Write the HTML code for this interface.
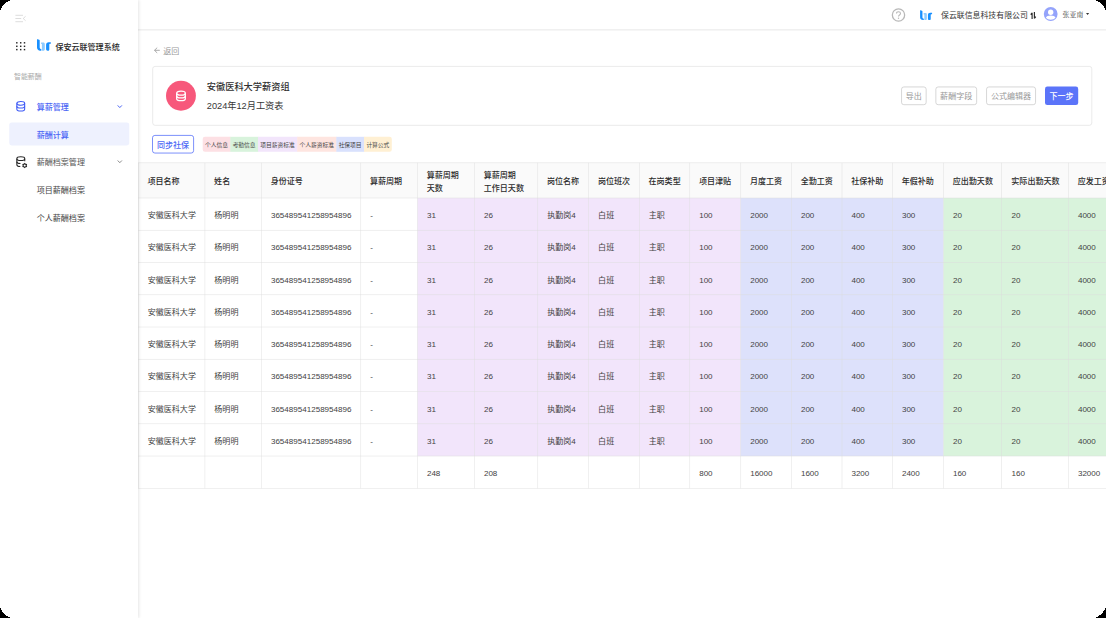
<!DOCTYPE html>
<html lang="zh-CN"><head><meta charset="utf-8"><title>薪酬计算</title><style>
html,body{margin:0;padding:0}
body{width:1106px;height:618px;background:#000;overflow:hidden;font-family:"Liberation Sans",sans-serif}
#app{position:absolute;left:0;top:0;width:1106px;height:618px;background:#fff;overflow:hidden}
#corners{z-index:9}
.abs,.t{position:absolute;display:block}
.t{font-size:0;line-height:0;color:transparent;overflow:hidden;white-space:nowrap}
.t svg{display:block}
.t text{font-family:"Liberation Sans","Noto Sans CJK SC",sans-serif;font-weight:400}
.t text.m{font-weight:500}
.t text.s{font-family:"Liberation Serif","Noto Serif CJK SC",serif}
aside{background:#fff;box-shadow:1px 0 3px rgba(0,0,0,.10);z-index:3}
header{background:#fff}
main{position:absolute;left:0;top:0}
</style></head>
<body>
<div id="app">
<aside class="abs" style="left:0;top:0;width:138.25px;height:618px">
<svg class="abs" style="left:14px;top:13px" width="14" height="11" viewBox="0 0 14 11" fill="none" stroke="#cfcfcf" stroke-width="0.7"><g transform="translate(1 1)"><path d="M0.4 1.3H8M0.4 4.5H6.2M0.4 7.7H8M10.6 2.3L8.2 4.5L10.6 6.7"/></g></svg>
<svg class="abs" style="left:14px;top:40px" width="13" height="12" viewBox="0 0 13 12" fill="#262626"><g transform="translate(1.8 1.8)"><rect x="0.28" y="0.28" width="1.45" height="1.45"/><rect x="0.28" y="3.78" width="1.45" height="1.45"/><rect x="0.28" y="7.08" width="1.45" height="1.45"/><rect x="4.18" y="0.28" width="1.45" height="1.45"/><rect x="4.18" y="3.78" width="1.45" height="1.45"/><rect x="4.18" y="7.08" width="1.45" height="1.45"/><rect x="7.98" y="0.28" width="1.45" height="1.45"/><rect x="7.98" y="3.78" width="1.45" height="1.45"/><rect x="7.98" y="7.08" width="1.45" height="1.45"/></g></svg>
<svg class="abs" style="left:36px;top:38px" width="16" height="14" viewBox="0 0 16 14"><g transform="translate(1 1.2)"><path d="M0 0.4C0 0.1 0.3 -0.1 0.6 0L2.1 0.5C2.5 0.6 2.7 0.9 2.7 1.3V8.2C2.7 9 3.2 9.6 4.3 9.9V11.5H3.4C1.3 11.5 0 10.3 0 8.3Z" fill="#1890ff"/><path d="M4.1 3.2H6.2C7.2 3.2 7.8 3.8 7.8 4.8V10C7.8 10.9 7.2 11.5 6.3 11.5H4.9V4.9H4.1Z" fill="#8ecbff"/><path d="M9.1 5.6C9.1 4 10.1 3 11.7 3H13.5C13.8 3 13.9 3.2 13.9 3.5V4C13.9 4.4 13.7 4.6 13.3 4.6H12.9C12.5 4.6 12.3 4.8 12.3 5.2V10.2C12.3 11 11.8 11.5 11 11.5H10.6C9.6 11.5 9.1 10.9 9.1 9.9Z" fill="#1890ff"/></g></svg>
<span class="t" style="left:54px;top:41px;width:67px;height:11px"><svg width="67" height="11" viewBox="0 0 67 11"><text class="m" x="1.4" y="8.77" font-size="8.064" fill="#262626">保安云联管理系统</text></svg></span>
<span class="t" style="left:13px;top:72px;width:30px;height:10px"><svg width="30" height="10" viewBox="0 0 30 10"><text x="1" y="7.32" font-size="6.912" fill="#aaa">智能薪酬</text></svg></span>
<svg class="abs" style="left:15px;top:99px" width="12" height="14" viewBox="0 0 12 14" fill="none" stroke="#3f5bf6" stroke-width="1.3"><g transform="translate(1 1.9) scale(0.84821 0.82308)"><g transform="translate(-0.4 0)"><ellipse cx="6" cy="3" rx="4.6" ry="2.2"/><path d="M1.4 3V10C1.4 11.2 3.5 12.2 6 12.2S10.6 11.2 10.6 10V3"/><path d="M1.4 6.5C1.4 7.7 3.5 8.7 6 8.7S10.6 7.7 10.6 6.5"/></g></g></svg>
<span class="t" style="left:35px;top:101px;width:35px;height:11px"><svg width="35" height="11" viewBox="0 0 35 11"><text class="m" x="1.7" y="8.67" font-size="8.064" fill="#4c66f5">算薪管理</text></svg></span>
<svg class="abs" style="left:116px;top:104px" width="8" height="6" viewBox="0 0 8 6" fill="none" stroke="#4c66f5" stroke-width="1.0"><g transform="translate(1.3 1)"><path d="M0.4 0.4L2.5 2.6L4.6 0.4"/></g></svg>
<svg class="abs" style="left:8px;top:121px" width="123" height="26" viewBox="0 0 123 26"><g transform="translate(1.25 1.4)"><rect x="0" y="0" width="120" height="23" rx="2.4" fill="#eef1fe"/></g></svg>
<span class="t" style="left:35px;top:129px;width:35px;height:11px"><svg width="35" height="11" viewBox="0 0 35 11"><text class="m" x="1.7" y="8.67" font-size="8.064" fill="#4c66f5">薪酬计算</text></svg></span>
<svg class="abs" style="left:15px;top:155px" width="12" height="14" viewBox="0 0 12 14" fill="none" stroke="#262626" stroke-width="1.25"><g transform="translate(1 1.1) scale(0.85714 0.85385)"><g transform="translate(-0.4 0)"><ellipse cx="6" cy="3" rx="4.6" ry="2.2"/><path d="M1.4 3V10C1.4 11.1 3.2 12 5.4 12.2M10.6 3V6"/><path d="M1.4 6.5C1.4 7.6 3.2 8.5 5.6 8.7"/></g></g></svg>
<svg class="abs" style="left:20px;top:161px" width="9" height="9" viewBox="0 0 9 9" fill="#2b2b2b"><g transform="translate(1.8 1.6) scale(0.90625)"><path fill-rule="evenodd" d="M3.2 0.1L4.35 1.21L5.88 1.65L5.5 3.2L5.88 4.75L4.35 5.19L3.2 6.3L2.05 5.19L0.52 4.75L0.9 3.2L0.52 1.65L2.05 1.21ZM3.2 2.05a1.15 1.15 0 1 0 0.01 0Z"/></g></svg>
<span class="t" style="left:35px;top:157px;width:52px;height:11px"><svg width="52" height="11" viewBox="0 0 52 11"><text x="1.7" y="8.37" font-size="8.064" fill="#555">薪酬档案管理</text></svg></span>
<svg class="abs" style="left:116px;top:159px" width="8" height="6" viewBox="0 0 8 6" fill="none" stroke="#777" stroke-width="0.85"><g transform="translate(1.3 1.1)"><path d="M0.4 0.4L2.5 2.6L4.6 0.4"/></g></svg>
<span class="t" style="left:35px;top:184px;width:52px;height:11px"><svg width="52" height="11" viewBox="0 0 52 11"><text x="1.7" y="8.87" font-size="8.064" fill="#444">项目薪酬档案</text></svg></span>
<span class="t" style="left:35px;top:212px;width:52px;height:11px"><svg width="52" height="11" viewBox="0 0 52 11"><text x="1.7" y="8.57" font-size="8.064" fill="#444">个人薪酬档案</text></svg></span>
</aside>
<header class="abs" style="left:138.25px;top:0;width:967.75px;height:30px"></header>
<svg class="abs" style="left:138px;top:29px" width="968" height="2" viewBox="0 0 968 2"><g transform="translate(0 0)"><rect width="968" height="1.6" fill="#f0f0f0"/></g></svg>
<svg class="abs" style="left:890px;top:7px" width="17" height="16" viewBox="0 0 17 16" fill="none" stroke="#b8b8b8" stroke-width="1.3"><g transform="translate(1.5 1)"><circle cx="7" cy="7" r="6.15"/><path d="M5 5.6C5 4.4 5.9 3.7 7 3.7S9 4.4 9 5.5C9 7 7 7 7 8.6" stroke-width="1.05"/><circle cx="7" cy="10.3" r="0.7" fill="#b8b8b8" stroke="none"/></g></svg>
<svg class="abs" style="left:919px;top:9px" width="15" height="13" viewBox="0 0 15 13"><g transform="translate(1.1 1.2) scale(0.86331 0.86087)"><path d="M0 0.4C0 0.1 0.3 -0.1 0.6 0L2.1 0.5C2.5 0.6 2.7 0.9 2.7 1.3V8.2C2.7 9 3.2 9.6 4.3 9.9V11.5H3.4C1.3 11.5 0 10.3 0 8.3Z" fill="#1890ff"/><path d="M4.1 3.2H6.2C7.2 3.2 7.8 3.8 7.8 4.8V10C7.8 10.9 7.2 11.5 6.3 11.5H4.9V4.9H4.1Z" fill="#8ecbff"/><path d="M9.1 5.6C9.1 4 10.1 3 11.7 3H13.5C13.8 3 13.9 3.2 13.9 3.5V4C13.9 4.4 13.7 4.6 13.3 4.6H12.9C12.5 4.6 12.3 4.8 12.3 5.2V10.2C12.3 11 11.8 11.5 11 11.5H10.6C9.6 11.5 9.1 10.9 9.1 9.9Z" fill="#1890ff"/></g></svg>
<span class="t" style="left:940px;top:10px;width:89px;height:11px"><svg width="89" height="11" viewBox="0 0 89 11"><text x="1" y="8.4" font-size="7.9" fill="#333">保云联信息科技有限公司</text></svg></span>
<svg class="abs" style="left:1029px;top:10px" width="9" height="11" viewBox="0 0 9 11" fill="none" stroke="#2b2b2b" stroke-width="1.15"><g transform="translate(1.4 1.9) scale(1 1.02778)"><path d="M1.7 7V0.9M1.7 0.9L0.3 2.6M4 0.2V6.3M4 6.3L5.4 4.6"/></g></svg>
<svg class="abs" style="left:1042px;top:6px" width="17" height="16" viewBox="0 0 17 16"><g transform="translate(1.8 1.1) scale(0.985714)"><circle cx="7" cy="7" r="7" fill="#94a3fb"/><circle cx="7" cy="5.2" r="2.7" fill="#fff"/><path d="M2.1 10.6C2.6 9.2 4.6 8.5 7 8.5S11.4 9.2 11.9 10.6C10.8 12 9 12.9 7 12.9S3.2 12 2.1 10.6Z" fill="#fff"/></g></svg>
<span class="t" style="left:1061px;top:10px;width:24px;height:10px"><svg width="24" height="10" viewBox="0 0 24 10"><text class="s" x="1.6" y="7.22" font-size="6.912" fill="#3a3a3a">张亚南</text></svg></span>
<svg class="abs" style="left:1085px;top:12px" width="6" height="5" viewBox="0 0 6 5" fill="#333"><g transform="translate(1 1.1)"><path d="M0 0H3.2L1.6 2Z"/></g></svg>
<main>
<svg class="abs" style="left:152px;top:46px" width="9" height="9" viewBox="0 0 9 9" fill="none" stroke="#939393" stroke-width="0.78"><g transform="translate(1.9 1.3)"><path d="M5.9 3H0.7M3.3 0.35L0.6 3L3.3 5.65"/></g></svg>
<span class="t" style="left:162px;top:45px;width:19px;height:11px"><svg width="19" height="11" viewBox="0 0 19 11"><text x="1.2" y="8.72" font-size="8.064" fill="#999">返回</text></svg></span>
<svg class="abs" style="left:151px;top:65px" width="943" height="62" viewBox="0 0 943 62"><g transform="translate(1.4 1.1)"><rect x="0.3" y="0.3" width="939.1" height="58.9" rx="2.4" fill="#fff" stroke="#dcdcdc" stroke-width="0.6"/></g></svg>
<svg class="abs" style="left:165px;top:79px" width="32" height="33" viewBox="0 0 32 33"><g transform="translate(1 1.8)"><circle cx="14.95" cy="14.95" r="14.95" fill="#f7587b"/></g></svg>
<svg class="abs" style="left:174px;top:89px" width="14" height="14" viewBox="0 0 14 14" fill="none" stroke="#fff" stroke-width="1.45"><g transform="translate(1.7 1.4) scale(0.88333 0.88095)"><ellipse cx="6" cy="3.1" rx="4.9" ry="2.2"/><path d="M1.1 3.1V9.4C1.1 10.6 3.3 11.6 6 11.6S10.9 10.6 10.9 9.4V3.1"/><path d="M1.1 6.25C1.1 7.45 3.3 8.45 6 8.45S10.9 7.45 10.9 6.25"/></g></svg>
<span class="t" style="left:205px;top:81px;width:86px;height:12px"><svg width="86" height="12" viewBox="0 0 86 12"><text class="m" x="1.8" y="9.4" font-size="9.216" fill="#303030">安徽医科大学薪资组</text></svg></span>
<span class="t" style="left:205px;top:99px;width:80px;height:12px"><svg width="80" height="12" viewBox="0 0 80 12"><text x="1.8" y="9.55" font-size="9.216" fill="#383838">2024年12月工资表</text></svg></span>
<svg class="abs" style="left:900px;top:85px" width="28" height="22" viewBox="0 0 28 22"><g transform="translate(1.2 1.6)"><rect x="0.35" y="0.35" width="24.6" height="17.75" rx="2.3" fill="#fff" stroke="#c6c6c6" stroke-width="0.7"/></g></svg>
<span class="t" style="left:904px;top:91px;width:19px;height:11px"><svg width="19" height="11" viewBox="0 0 19 11"><text x="1.79" y="8.37" font-size="8.064" fill="#999">导出</text></svg></span>
<svg class="abs" style="left:934px;top:85px" width="44" height="22" viewBox="0 0 44 22"><g transform="translate(1.5 1.6)"><rect x="0.35" y="0.35" width="40.8" height="17.75" rx="2.3" fill="#fff" stroke="#c6c6c6" stroke-width="0.7"/></g></svg>
<span class="t" style="left:939px;top:91px;width:35px;height:11px"><svg width="35" height="11" viewBox="0 0 35 11"><text x="1.12" y="8.37" font-size="8.064" fill="#999">薪酬字段</text></svg></span>
<svg class="abs" style="left:985px;top:85px" width="52" height="22" viewBox="0 0 52 22"><g transform="translate(1.2 1.6)"><rect x="0.35" y="0.35" width="49" height="17.75" rx="2.3" fill="#fff" stroke="#c6c6c6" stroke-width="0.7"/></g></svg>
<span class="t" style="left:989px;top:91px;width:44px;height:11px"><svg width="44" height="11" viewBox="0 0 44 11"><text x="1.89" y="8.37" font-size="8.064" fill="#999">公式编辑器</text></svg></span>
<svg class="abs" style="left:1044px;top:85px" width="36" height="22" viewBox="0 0 36 22"><g transform="translate(1 1.6)"><rect x="0" y="0" width="33.2" height="18.45" rx="2.3" fill="#5b74f9"/></g></svg>
<span class="t" style="left:1048px;top:91px;width:27px;height:11px"><svg width="27" height="11" viewBox="0 0 27 11"><text class="m" x="1.5" y="8.37" font-size="8.064" fill="#fff">下一步</text></svg></span>
<svg class="abs" style="left:151px;top:134px" width="44" height="21" viewBox="0 0 44 21"><g transform="translate(1.1 1)"><rect x="0.4" y="0.4" width="41.1" height="17.65" rx="2.4" fill="#fff" stroke="#5b74f9" stroke-width="0.8"/></g></svg>
<span class="t" style="left:155px;top:139px;width:36px;height:11px"><svg width="36" height="11" viewBox="0 0 36 11"><text class="m" x="1.97" y="8.57" font-size="8.064" fill="#4c66f5">同步社保</text></svg></span>
<svg class="abs" style="left:201px;top:135px" width="31" height="18" viewBox="0 0 31 18"><g transform="translate(1.7 1.8)"><path d="M2.3 0H28A0 0 0 0 1 28 0V15A0 0 0 0 1 28 15H2.3A2.3 2.3 0 0 1 0 12.7V2.3A2.3 2.3 0 0 1 2.3 0Z" fill="#fde0e4"/></g></svg>
<span class="t" style="left:203px;top:140px;width:27px;height:9px"><svg width="27" height="9" viewBox="0 0 27 9"><text x="1.98" y="6.59" font-size="5.76" fill="#444">个人信息</text></svg></span>
<svg class="abs" style="left:229px;top:135px" width="31" height="18" viewBox="0 0 31 18"><g transform="translate(1.3 1.8)"><path d="M0 0H28.1A0 0 0 0 1 28.1 0V15A0 0 0 0 1 28.1 15H0A0 0 0 0 1 0 15V0A0 0 0 0 1 0 0Z" fill="#d8f3dc"/></g></svg>
<span class="t" style="left:231px;top:140px;width:26px;height:9px"><svg width="26" height="9" viewBox="0 0 26 9"><text x="1.63" y="6.59" font-size="5.76" fill="#444">考勤信息</text></svg></span>
<svg class="abs" style="left:257px;top:135px" width="42" height="18" viewBox="0 0 42 18"><g transform="translate(1 1.8)"><path d="M0 0H39.6A0 0 0 0 1 39.6 0V15A0 0 0 0 1 39.6 15H0A0 0 0 0 1 0 15V0A0 0 0 0 1 0 0Z" fill="#f2e5fb"/></g></svg>
<span class="t" style="left:259px;top:140px;width:37px;height:9px"><svg width="37" height="9" viewBox="0 0 37 9"><text x="1.32" y="6.59" font-size="5.76" fill="#444">项目薪资标准</text></svg></span>
<svg class="abs" style="left:296px;top:135px" width="42" height="18" viewBox="0 0 42 18"><g transform="translate(1.2 1.8)"><path d="M0 0H39.5A0 0 0 0 1 39.5 0V15A0 0 0 0 1 39.5 15H0A0 0 0 0 1 0 15V0A0 0 0 0 1 0 0Z" fill="#fee5e0"/></g></svg>
<span class="t" style="left:298px;top:140px;width:38px;height:9px"><svg width="38" height="9" viewBox="0 0 38 9"><text x="1.47" y="6.59" font-size="5.76" fill="#444">个人薪资标准</text></svg></span>
<svg class="abs" style="left:335px;top:135px" width="31" height="18" viewBox="0 0 31 18"><g transform="translate(1.3 1.8)"><path d="M0 0H28.1A0 0 0 0 1 28.1 0V15A0 0 0 0 1 28.1 15H0A0 0 0 0 1 0 15V0A0 0 0 0 1 0 0Z" fill="#d9e1fd"/></g></svg>
<span class="t" style="left:337px;top:140px;width:26px;height:9px"><svg width="26" height="9" viewBox="0 0 26 9"><text x="1.63" y="6.59" font-size="5.76" fill="#444">社保项目</text></svg></span>
<svg class="abs" style="left:363px;top:135px" width="30" height="18" viewBox="0 0 30 18"><g transform="translate(1 1.8)"><path d="M0 0H25.5A2.3 2.3 0 0 1 27.8 2.3V12.7A2.3 2.3 0 0 1 25.5 15H0A0 0 0 0 1 0 15V0A0 0 0 0 1 0 0Z" fill="#fff0d3"/></g></svg>
<span class="t" style="left:365px;top:140px;width:26px;height:9px"><svg width="26" height="9" viewBox="0 0 26 9"><text x="1.38" y="6.59" font-size="5.76" fill="#444">计算公式</text></svg></span>
<section class="abs" style="left:0;top:0;width:1106px;height:618px;overflow:hidden">
<svg class="abs" style="left:0;top:0" width="1106" height="618" viewBox="0 0 1106 618"><rect x="138.25" y="162.8" width="967.75" height="35.2" fill="#fafafa"/><rect x="417.5" y="198" width="323.25" height="258.05" fill="#f2e5fb"/><rect x="740.75" y="198" width="202.75" height="258.05" fill="#dde1fb"/><rect x="943.5" y="198" width="163.5" height="258.05" fill="#d9f3dc"/><g fill="#dcdcdc" fill-opacity="0.75"><rect x="137.95" y="162.8" width="0.6" height="325.5"/><rect x="204.6" y="162.8" width="0.6" height="325.5"/><rect x="261.2" y="162.8" width="0.6" height="325.5"/><rect x="360.45" y="162.8" width="0.6" height="325.5"/><rect x="417.2" y="162.8" width="0.6" height="325.5"/><rect x="474.2" y="162.8" width="0.6" height="325.5"/><rect x="537.45" y="162.8" width="0.6" height="325.5"/><rect x="588.4" y="162.8" width="0.6" height="325.5"/><rect x="639" y="162.8" width="0.6" height="325.5"/><rect x="689.45" y="162.8" width="0.6" height="325.5"/><rect x="740.45" y="162.8" width="0.6" height="325.5"/><rect x="791.2" y="162.8" width="0.6" height="325.5"/><rect x="841.7" y="162.8" width="0.6" height="325.5"/><rect x="892.2" y="162.8" width="0.6" height="325.5"/><rect x="943.2" y="162.8" width="0.6" height="325.5"/><rect x="1001.1" y="162.8" width="0.6" height="325.5"/><rect x="1068.2" y="162.8" width="0.6" height="325.5"/><rect x="138.25" y="162.5" width="967.75" height="0.6"/><rect x="138.25" y="197.7" width="967.75" height="0.6"/><rect x="138.25" y="229.96" width="967.75" height="0.6"/><rect x="138.25" y="262.21" width="967.75" height="0.6"/><rect x="138.25" y="294.47" width="967.75" height="0.6"/><rect x="138.25" y="326.72" width="967.75" height="0.6"/><rect x="138.25" y="358.98" width="967.75" height="0.6"/><rect x="138.25" y="391.24" width="967.75" height="0.6"/><rect x="138.25" y="423.49" width="967.75" height="0.6"/><rect x="138.25" y="455.75" width="967.75" height="0.6"/><rect x="138.25" y="488" width="967.75" height="0.6"/></g></svg>
<div role="table" aria-label="工资表">
<div role="row" class="thead">
<span class="t" style="left:146px;top:176px;width:35px;height:11px"><svg width="35" height="11" viewBox="0 0 35 11"><text class="m" x="1.47" y="8.32" font-size="8.064" fill="#2b2b2b">项目名称</text></svg></span>
<span class="t" style="left:213px;top:176px;width:19px;height:11px"><svg width="19" height="11" viewBox="0 0 19 11"><text class="m" x="1.12" y="8.32" font-size="8.064" fill="#2b2b2b">姓名</text></svg></span>
<span class="t" style="left:269px;top:176px;width:35px;height:11px"><svg width="35" height="11" viewBox="0 0 35 11"><text class="m" x="1.72" y="8.32" font-size="8.064" fill="#2b2b2b">身份证号</text></svg></span>
<span class="t" style="left:368px;top:176px;width:36px;height:11px"><svg width="36" height="11" viewBox="0 0 36 11"><text class="m" x="1.97" y="8.32" font-size="8.064" fill="#2b2b2b">算薪周期</text></svg></span>
<span class="t" style="left:425px;top:169px;width:35px;height:11px"><svg width="35" height="11" viewBox="0 0 35 11"><text class="m" x="1.72" y="9.02" font-size="8.064" fill="#2b2b2b">算薪周期</text></svg></span>
<span class="t" style="left:425px;top:182px;width:19px;height:11px"><svg width="19" height="11" viewBox="0 0 19 11"><text class="m" x="1.72" y="8.62" font-size="8.064" fill="#2b2b2b">天数</text></svg></span>
<span class="t" style="left:482px;top:169px;width:35px;height:11px"><svg width="35" height="11" viewBox="0 0 35 11"><text class="m" x="1.72" y="9.02" font-size="8.064" fill="#2b2b2b">算薪周期</text></svg></span>
<span class="t" style="left:482px;top:182px;width:44px;height:11px"><svg width="44" height="11" viewBox="0 0 44 11"><text class="m" x="1.72" y="8.62" font-size="8.064" fill="#2b2b2b">工作日天数</text></svg></span>
<span class="t" style="left:545px;top:176px;width:36px;height:11px"><svg width="36" height="11" viewBox="0 0 36 11"><text class="m" x="1.97" y="8.32" font-size="8.064" fill="#2b2b2b">岗位名称</text></svg></span>
<span class="t" style="left:596px;top:176px;width:36px;height:11px"><svg width="36" height="11" viewBox="0 0 36 11"><text class="m" x="1.92" y="8.32" font-size="8.064" fill="#2b2b2b">岗位班次</text></svg></span>
<span class="t" style="left:647px;top:176px;width:35px;height:11px"><svg width="35" height="11" viewBox="0 0 35 11"><text class="m" x="1.52" y="8.32" font-size="8.064" fill="#2b2b2b">在岗类型</text></svg></span>
<span class="t" style="left:697px;top:176px;width:36px;height:11px"><svg width="36" height="11" viewBox="0 0 36 11"><text class="m" x="1.97" y="8.32" font-size="8.064" fill="#2b2b2b">项目津贴</text></svg></span>
<span class="t" style="left:748px;top:176px;width:36px;height:11px"><svg width="36" height="11" viewBox="0 0 36 11"><text class="m" x="1.97" y="8.32" font-size="8.064" fill="#2b2b2b">月度工资</text></svg></span>
<span class="t" style="left:799px;top:176px;width:35px;height:11px"><svg width="35" height="11" viewBox="0 0 35 11"><text class="m" x="1.72" y="8.32" font-size="8.064" fill="#2b2b2b">全勤工资</text></svg></span>
<span class="t" style="left:850px;top:176px;width:35px;height:11px"><svg width="35" height="11" viewBox="0 0 35 11"><text class="m" x="1.22" y="8.32" font-size="8.064" fill="#2b2b2b">社保补助</text></svg></span>
<span class="t" style="left:900px;top:176px;width:35px;height:11px"><svg width="35" height="11" viewBox="0 0 35 11"><text class="m" x="1.72" y="8.32" font-size="8.064" fill="#2b2b2b">年假补助</text></svg></span>
<span class="t" style="left:951px;top:176px;width:44px;height:11px"><svg width="44" height="11" viewBox="0 0 44 11"><text class="m" x="1.72" y="8.32" font-size="8.064" fill="#2b2b2b">应出勤天数</text></svg></span>
<span class="t" style="left:1010px;top:176px;width:51px;height:11px"><svg width="51" height="11" viewBox="0 0 51 11"><text class="m" x="1.32" y="8.32" font-size="8.064" fill="#2b2b2b">实际出勤天数</text></svg></span>
<span class="t" style="left:1076px;top:176px;width:35px;height:11px"><svg width="35" height="11" viewBox="0 0 35 11"><text class="m" x="1.72" y="8.32" font-size="8.064" fill="#2b2b2b">应发工资</text></svg></span>
</div>
<div role="row">
<span class="t" style="left:146px;top:209px;width:52px;height:12px"><svg width="52" height="12" viewBox="0 0 52 12"><text x="1.67" y="9.05" font-size="8.064" fill="#434343">安徽医科大学</text></svg></span>
<span class="t" style="left:213px;top:209px;width:27px;height:12px"><svg width="27" height="12" viewBox="0 0 27 12"><text x="1.32" y="9.05" font-size="8.064" fill="#434343">杨明明</text></svg></span>
<span class="t" style="left:269px;top:209px;width:84px;height:12px"><svg width="84" height="12" viewBox="0 0 84 12"><text x="1.92" y="9.05" font-size="8.064" fill="#434343">365489541258954896</text></svg></span>
<span class="t" style="left:369px;top:209px;width:5px;height:12px"><svg width="5" height="12" viewBox="0 0 5 12"><text x="1.17" y="9.05" font-size="8.064" fill="#434343">-</text></svg></span>
<span class="t" style="left:425px;top:209px;width:12px;height:12px"><svg width="12" height="12" viewBox="0 0 12 12"><text x="1.92" y="9.05" font-size="8.064" fill="#434343">31</text></svg></span>
<span class="t" style="left:482px;top:209px;width:12px;height:12px"><svg width="12" height="12" viewBox="0 0 12 12"><text x="1.92" y="9.05" font-size="8.064" fill="#434343">26</text></svg></span>
<span class="t" style="left:546px;top:209px;width:31px;height:12px"><svg width="31" height="12" viewBox="0 0 31 12"><text x="1.17" y="9.05" font-size="8.064" fill="#434343">执勤岗4</text></svg></span>
<span class="t" style="left:597px;top:209px;width:19px;height:12px"><svg width="19" height="12" viewBox="0 0 19 12"><text x="1.12" y="9.05" font-size="8.064" fill="#434343">白班</text></svg></span>
<span class="t" style="left:647px;top:209px;width:19px;height:12px"><svg width="19" height="12" viewBox="0 0 19 12"><text x="1.72" y="9.05" font-size="8.064" fill="#434343">主职</text></svg></span>
<span class="t" style="left:698px;top:209px;width:16px;height:12px"><svg width="16" height="12" viewBox="0 0 16 12"><text x="1.17" y="9.05" font-size="8.064" fill="#434343">100</text></svg></span>
<span class="t" style="left:749px;top:209px;width:21px;height:12px"><svg width="21" height="12" viewBox="0 0 21 12"><text x="1.17" y="9.05" font-size="8.064" fill="#434343">2000</text></svg></span>
<span class="t" style="left:799px;top:209px;width:17px;height:12px"><svg width="17" height="12" viewBox="0 0 17 12"><text x="1.92" y="9.05" font-size="8.064" fill="#434343">200</text></svg></span>
<span class="t" style="left:850px;top:209px;width:16px;height:12px"><svg width="16" height="12" viewBox="0 0 16 12"><text x="1.42" y="9.05" font-size="8.064" fill="#434343">400</text></svg></span>
<span class="t" style="left:900px;top:209px;width:17px;height:12px"><svg width="17" height="12" viewBox="0 0 17 12"><text x="1.92" y="9.05" font-size="8.064" fill="#434343">300</text></svg></span>
<span class="t" style="left:951px;top:209px;width:12px;height:12px"><svg width="12" height="12" viewBox="0 0 12 12"><text x="1.92" y="9.05" font-size="8.064" fill="#434343">20</text></svg></span>
<span class="t" style="left:1010px;top:209px;width:12px;height:12px"><svg width="12" height="12" viewBox="0 0 12 12"><text x="1.52" y="9.05" font-size="8.064" fill="#434343">20</text></svg></span>
<span class="t" style="left:1076px;top:209px;width:21px;height:12px"><svg width="21" height="12" viewBox="0 0 21 12"><text x="1.92" y="9.05" font-size="8.064" fill="#434343">4000</text></svg></span>
</div>
<div role="row">
<span class="t" style="left:146px;top:242px;width:52px;height:11px"><svg width="52" height="11" viewBox="0 0 52 11"><text x="1.67" y="8.3" font-size="8.064" fill="#434343">安徽医科大学</text></svg></span>
<span class="t" style="left:213px;top:242px;width:27px;height:11px"><svg width="27" height="11" viewBox="0 0 27 11"><text x="1.32" y="8.3" font-size="8.064" fill="#434343">杨明明</text></svg></span>
<span class="t" style="left:269px;top:242px;width:84px;height:11px"><svg width="84" height="11" viewBox="0 0 84 11"><text x="1.92" y="8.3" font-size="8.064" fill="#434343">365489541258954896</text></svg></span>
<span class="t" style="left:369px;top:242px;width:5px;height:11px"><svg width="5" height="11" viewBox="0 0 5 11"><text x="1.17" y="8.3" font-size="8.064" fill="#434343">-</text></svg></span>
<span class="t" style="left:425px;top:242px;width:12px;height:11px"><svg width="12" height="11" viewBox="0 0 12 11"><text x="1.92" y="8.3" font-size="8.064" fill="#434343">31</text></svg></span>
<span class="t" style="left:482px;top:242px;width:12px;height:11px"><svg width="12" height="11" viewBox="0 0 12 11"><text x="1.92" y="8.3" font-size="8.064" fill="#434343">26</text></svg></span>
<span class="t" style="left:546px;top:242px;width:31px;height:11px"><svg width="31" height="11" viewBox="0 0 31 11"><text x="1.17" y="8.3" font-size="8.064" fill="#434343">执勤岗4</text></svg></span>
<span class="t" style="left:597px;top:242px;width:19px;height:11px"><svg width="19" height="11" viewBox="0 0 19 11"><text x="1.12" y="8.3" font-size="8.064" fill="#434343">白班</text></svg></span>
<span class="t" style="left:647px;top:242px;width:19px;height:11px"><svg width="19" height="11" viewBox="0 0 19 11"><text x="1.72" y="8.3" font-size="8.064" fill="#434343">主职</text></svg></span>
<span class="t" style="left:698px;top:242px;width:16px;height:11px"><svg width="16" height="11" viewBox="0 0 16 11"><text x="1.17" y="8.3" font-size="8.064" fill="#434343">100</text></svg></span>
<span class="t" style="left:749px;top:242px;width:21px;height:11px"><svg width="21" height="11" viewBox="0 0 21 11"><text x="1.17" y="8.3" font-size="8.064" fill="#434343">2000</text></svg></span>
<span class="t" style="left:799px;top:242px;width:17px;height:11px"><svg width="17" height="11" viewBox="0 0 17 11"><text x="1.92" y="8.3" font-size="8.064" fill="#434343">200</text></svg></span>
<span class="t" style="left:850px;top:242px;width:16px;height:11px"><svg width="16" height="11" viewBox="0 0 16 11"><text x="1.42" y="8.3" font-size="8.064" fill="#434343">400</text></svg></span>
<span class="t" style="left:900px;top:242px;width:17px;height:11px"><svg width="17" height="11" viewBox="0 0 17 11"><text x="1.92" y="8.3" font-size="8.064" fill="#434343">300</text></svg></span>
<span class="t" style="left:951px;top:242px;width:12px;height:11px"><svg width="12" height="11" viewBox="0 0 12 11"><text x="1.92" y="8.3" font-size="8.064" fill="#434343">20</text></svg></span>
<span class="t" style="left:1010px;top:242px;width:12px;height:11px"><svg width="12" height="11" viewBox="0 0 12 11"><text x="1.52" y="8.3" font-size="8.064" fill="#434343">20</text></svg></span>
<span class="t" style="left:1076px;top:242px;width:21px;height:11px"><svg width="21" height="11" viewBox="0 0 21 11"><text x="1.92" y="8.3" font-size="8.064" fill="#434343">4000</text></svg></span>
</div>
<div role="row">
<span class="t" style="left:146px;top:274px;width:52px;height:11px"><svg width="52" height="11" viewBox="0 0 52 11"><text x="1.67" y="8.56" font-size="8.064" fill="#434343">安徽医科大学</text></svg></span>
<span class="t" style="left:213px;top:274px;width:27px;height:11px"><svg width="27" height="11" viewBox="0 0 27 11"><text x="1.32" y="8.56" font-size="8.064" fill="#434343">杨明明</text></svg></span>
<span class="t" style="left:269px;top:274px;width:84px;height:11px"><svg width="84" height="11" viewBox="0 0 84 11"><text x="1.92" y="8.56" font-size="8.064" fill="#434343">365489541258954896</text></svg></span>
<span class="t" style="left:369px;top:274px;width:5px;height:11px"><svg width="5" height="11" viewBox="0 0 5 11"><text x="1.17" y="8.56" font-size="8.064" fill="#434343">-</text></svg></span>
<span class="t" style="left:425px;top:274px;width:12px;height:11px"><svg width="12" height="11" viewBox="0 0 12 11"><text x="1.92" y="8.56" font-size="8.064" fill="#434343">31</text></svg></span>
<span class="t" style="left:482px;top:274px;width:12px;height:11px"><svg width="12" height="11" viewBox="0 0 12 11"><text x="1.92" y="8.56" font-size="8.064" fill="#434343">26</text></svg></span>
<span class="t" style="left:546px;top:274px;width:31px;height:11px"><svg width="31" height="11" viewBox="0 0 31 11"><text x="1.17" y="8.56" font-size="8.064" fill="#434343">执勤岗4</text></svg></span>
<span class="t" style="left:597px;top:274px;width:19px;height:11px"><svg width="19" height="11" viewBox="0 0 19 11"><text x="1.12" y="8.56" font-size="8.064" fill="#434343">白班</text></svg></span>
<span class="t" style="left:647px;top:274px;width:19px;height:11px"><svg width="19" height="11" viewBox="0 0 19 11"><text x="1.72" y="8.56" font-size="8.064" fill="#434343">主职</text></svg></span>
<span class="t" style="left:698px;top:274px;width:16px;height:11px"><svg width="16" height="11" viewBox="0 0 16 11"><text x="1.17" y="8.56" font-size="8.064" fill="#434343">100</text></svg></span>
<span class="t" style="left:749px;top:274px;width:21px;height:11px"><svg width="21" height="11" viewBox="0 0 21 11"><text x="1.17" y="8.56" font-size="8.064" fill="#434343">2000</text></svg></span>
<span class="t" style="left:799px;top:274px;width:17px;height:11px"><svg width="17" height="11" viewBox="0 0 17 11"><text x="1.92" y="8.56" font-size="8.064" fill="#434343">200</text></svg></span>
<span class="t" style="left:850px;top:274px;width:16px;height:11px"><svg width="16" height="11" viewBox="0 0 16 11"><text x="1.42" y="8.56" font-size="8.064" fill="#434343">400</text></svg></span>
<span class="t" style="left:900px;top:274px;width:17px;height:11px"><svg width="17" height="11" viewBox="0 0 17 11"><text x="1.92" y="8.56" font-size="8.064" fill="#434343">300</text></svg></span>
<span class="t" style="left:951px;top:274px;width:12px;height:11px"><svg width="12" height="11" viewBox="0 0 12 11"><text x="1.92" y="8.56" font-size="8.064" fill="#434343">20</text></svg></span>
<span class="t" style="left:1010px;top:274px;width:12px;height:11px"><svg width="12" height="11" viewBox="0 0 12 11"><text x="1.52" y="8.56" font-size="8.064" fill="#434343">20</text></svg></span>
<span class="t" style="left:1076px;top:274px;width:21px;height:11px"><svg width="21" height="11" viewBox="0 0 21 11"><text x="1.92" y="8.56" font-size="8.064" fill="#434343">4000</text></svg></span>
</div>
<div role="row">
<span class="t" style="left:146px;top:306px;width:52px;height:11px"><svg width="52" height="11" viewBox="0 0 52 11"><text x="1.67" y="8.81" font-size="8.064" fill="#434343">安徽医科大学</text></svg></span>
<span class="t" style="left:213px;top:306px;width:27px;height:11px"><svg width="27" height="11" viewBox="0 0 27 11"><text x="1.32" y="8.81" font-size="8.064" fill="#434343">杨明明</text></svg></span>
<span class="t" style="left:269px;top:306px;width:84px;height:11px"><svg width="84" height="11" viewBox="0 0 84 11"><text x="1.92" y="8.81" font-size="8.064" fill="#434343">365489541258954896</text></svg></span>
<span class="t" style="left:369px;top:306px;width:5px;height:11px"><svg width="5" height="11" viewBox="0 0 5 11"><text x="1.17" y="8.81" font-size="8.064" fill="#434343">-</text></svg></span>
<span class="t" style="left:425px;top:306px;width:12px;height:11px"><svg width="12" height="11" viewBox="0 0 12 11"><text x="1.92" y="8.81" font-size="8.064" fill="#434343">31</text></svg></span>
<span class="t" style="left:482px;top:306px;width:12px;height:11px"><svg width="12" height="11" viewBox="0 0 12 11"><text x="1.92" y="8.81" font-size="8.064" fill="#434343">26</text></svg></span>
<span class="t" style="left:546px;top:306px;width:31px;height:11px"><svg width="31" height="11" viewBox="0 0 31 11"><text x="1.17" y="8.81" font-size="8.064" fill="#434343">执勤岗4</text></svg></span>
<span class="t" style="left:597px;top:306px;width:19px;height:11px"><svg width="19" height="11" viewBox="0 0 19 11"><text x="1.12" y="8.81" font-size="8.064" fill="#434343">白班</text></svg></span>
<span class="t" style="left:647px;top:306px;width:19px;height:11px"><svg width="19" height="11" viewBox="0 0 19 11"><text x="1.72" y="8.81" font-size="8.064" fill="#434343">主职</text></svg></span>
<span class="t" style="left:698px;top:306px;width:16px;height:11px"><svg width="16" height="11" viewBox="0 0 16 11"><text x="1.17" y="8.81" font-size="8.064" fill="#434343">100</text></svg></span>
<span class="t" style="left:749px;top:306px;width:21px;height:11px"><svg width="21" height="11" viewBox="0 0 21 11"><text x="1.17" y="8.81" font-size="8.064" fill="#434343">2000</text></svg></span>
<span class="t" style="left:799px;top:306px;width:17px;height:11px"><svg width="17" height="11" viewBox="0 0 17 11"><text x="1.92" y="8.81" font-size="8.064" fill="#434343">200</text></svg></span>
<span class="t" style="left:850px;top:306px;width:16px;height:11px"><svg width="16" height="11" viewBox="0 0 16 11"><text x="1.42" y="8.81" font-size="8.064" fill="#434343">400</text></svg></span>
<span class="t" style="left:900px;top:306px;width:17px;height:11px"><svg width="17" height="11" viewBox="0 0 17 11"><text x="1.92" y="8.81" font-size="8.064" fill="#434343">300</text></svg></span>
<span class="t" style="left:951px;top:306px;width:12px;height:11px"><svg width="12" height="11" viewBox="0 0 12 11"><text x="1.92" y="8.81" font-size="8.064" fill="#434343">20</text></svg></span>
<span class="t" style="left:1010px;top:306px;width:12px;height:11px"><svg width="12" height="11" viewBox="0 0 12 11"><text x="1.52" y="8.81" font-size="8.064" fill="#434343">20</text></svg></span>
<span class="t" style="left:1076px;top:306px;width:21px;height:11px"><svg width="21" height="11" viewBox="0 0 21 11"><text x="1.92" y="8.81" font-size="8.064" fill="#434343">4000</text></svg></span>
</div>
<div role="row">
<span class="t" style="left:146px;top:338px;width:52px;height:12px"><svg width="52" height="12" viewBox="0 0 52 12"><text x="1.67" y="9.07" font-size="8.064" fill="#434343">安徽医科大学</text></svg></span>
<span class="t" style="left:213px;top:338px;width:27px;height:12px"><svg width="27" height="12" viewBox="0 0 27 12"><text x="1.32" y="9.07" font-size="8.064" fill="#434343">杨明明</text></svg></span>
<span class="t" style="left:269px;top:338px;width:84px;height:12px"><svg width="84" height="12" viewBox="0 0 84 12"><text x="1.92" y="9.07" font-size="8.064" fill="#434343">365489541258954896</text></svg></span>
<span class="t" style="left:369px;top:338px;width:5px;height:12px"><svg width="5" height="12" viewBox="0 0 5 12"><text x="1.17" y="9.07" font-size="8.064" fill="#434343">-</text></svg></span>
<span class="t" style="left:425px;top:338px;width:12px;height:12px"><svg width="12" height="12" viewBox="0 0 12 12"><text x="1.92" y="9.07" font-size="8.064" fill="#434343">31</text></svg></span>
<span class="t" style="left:482px;top:338px;width:12px;height:12px"><svg width="12" height="12" viewBox="0 0 12 12"><text x="1.92" y="9.07" font-size="8.064" fill="#434343">26</text></svg></span>
<span class="t" style="left:546px;top:338px;width:31px;height:12px"><svg width="31" height="12" viewBox="0 0 31 12"><text x="1.17" y="9.07" font-size="8.064" fill="#434343">执勤岗4</text></svg></span>
<span class="t" style="left:597px;top:338px;width:19px;height:12px"><svg width="19" height="12" viewBox="0 0 19 12"><text x="1.12" y="9.07" font-size="8.064" fill="#434343">白班</text></svg></span>
<span class="t" style="left:647px;top:338px;width:19px;height:12px"><svg width="19" height="12" viewBox="0 0 19 12"><text x="1.72" y="9.07" font-size="8.064" fill="#434343">主职</text></svg></span>
<span class="t" style="left:698px;top:338px;width:16px;height:12px"><svg width="16" height="12" viewBox="0 0 16 12"><text x="1.17" y="9.07" font-size="8.064" fill="#434343">100</text></svg></span>
<span class="t" style="left:749px;top:338px;width:21px;height:12px"><svg width="21" height="12" viewBox="0 0 21 12"><text x="1.17" y="9.07" font-size="8.064" fill="#434343">2000</text></svg></span>
<span class="t" style="left:799px;top:338px;width:17px;height:12px"><svg width="17" height="12" viewBox="0 0 17 12"><text x="1.92" y="9.07" font-size="8.064" fill="#434343">200</text></svg></span>
<span class="t" style="left:850px;top:338px;width:16px;height:12px"><svg width="16" height="12" viewBox="0 0 16 12"><text x="1.42" y="9.07" font-size="8.064" fill="#434343">400</text></svg></span>
<span class="t" style="left:900px;top:338px;width:17px;height:12px"><svg width="17" height="12" viewBox="0 0 17 12"><text x="1.92" y="9.07" font-size="8.064" fill="#434343">300</text></svg></span>
<span class="t" style="left:951px;top:338px;width:12px;height:12px"><svg width="12" height="12" viewBox="0 0 12 12"><text x="1.92" y="9.07" font-size="8.064" fill="#434343">20</text></svg></span>
<span class="t" style="left:1010px;top:338px;width:12px;height:12px"><svg width="12" height="12" viewBox="0 0 12 12"><text x="1.52" y="9.07" font-size="8.064" fill="#434343">20</text></svg></span>
<span class="t" style="left:1076px;top:338px;width:21px;height:12px"><svg width="21" height="12" viewBox="0 0 21 12"><text x="1.92" y="9.07" font-size="8.064" fill="#434343">4000</text></svg></span>
</div>
<div role="row">
<span class="t" style="left:146px;top:371px;width:52px;height:11px"><svg width="52" height="11" viewBox="0 0 52 11"><text x="1.67" y="8.33" font-size="8.064" fill="#434343">安徽医科大学</text></svg></span>
<span class="t" style="left:213px;top:371px;width:27px;height:11px"><svg width="27" height="11" viewBox="0 0 27 11"><text x="1.32" y="8.33" font-size="8.064" fill="#434343">杨明明</text></svg></span>
<span class="t" style="left:269px;top:371px;width:84px;height:11px"><svg width="84" height="11" viewBox="0 0 84 11"><text x="1.92" y="8.33" font-size="8.064" fill="#434343">365489541258954896</text></svg></span>
<span class="t" style="left:369px;top:371px;width:5px;height:11px"><svg width="5" height="11" viewBox="0 0 5 11"><text x="1.17" y="8.33" font-size="8.064" fill="#434343">-</text></svg></span>
<span class="t" style="left:425px;top:371px;width:12px;height:11px"><svg width="12" height="11" viewBox="0 0 12 11"><text x="1.92" y="8.33" font-size="8.064" fill="#434343">31</text></svg></span>
<span class="t" style="left:482px;top:371px;width:12px;height:11px"><svg width="12" height="11" viewBox="0 0 12 11"><text x="1.92" y="8.33" font-size="8.064" fill="#434343">26</text></svg></span>
<span class="t" style="left:546px;top:371px;width:31px;height:11px"><svg width="31" height="11" viewBox="0 0 31 11"><text x="1.17" y="8.33" font-size="8.064" fill="#434343">执勤岗4</text></svg></span>
<span class="t" style="left:597px;top:371px;width:19px;height:11px"><svg width="19" height="11" viewBox="0 0 19 11"><text x="1.12" y="8.33" font-size="8.064" fill="#434343">白班</text></svg></span>
<span class="t" style="left:647px;top:371px;width:19px;height:11px"><svg width="19" height="11" viewBox="0 0 19 11"><text x="1.72" y="8.33" font-size="8.064" fill="#434343">主职</text></svg></span>
<span class="t" style="left:698px;top:371px;width:16px;height:11px"><svg width="16" height="11" viewBox="0 0 16 11"><text x="1.17" y="8.33" font-size="8.064" fill="#434343">100</text></svg></span>
<span class="t" style="left:749px;top:371px;width:21px;height:11px"><svg width="21" height="11" viewBox="0 0 21 11"><text x="1.17" y="8.33" font-size="8.064" fill="#434343">2000</text></svg></span>
<span class="t" style="left:799px;top:371px;width:17px;height:11px"><svg width="17" height="11" viewBox="0 0 17 11"><text x="1.92" y="8.33" font-size="8.064" fill="#434343">200</text></svg></span>
<span class="t" style="left:850px;top:371px;width:16px;height:11px"><svg width="16" height="11" viewBox="0 0 16 11"><text x="1.42" y="8.33" font-size="8.064" fill="#434343">400</text></svg></span>
<span class="t" style="left:900px;top:371px;width:17px;height:11px"><svg width="17" height="11" viewBox="0 0 17 11"><text x="1.92" y="8.33" font-size="8.064" fill="#434343">300</text></svg></span>
<span class="t" style="left:951px;top:371px;width:12px;height:11px"><svg width="12" height="11" viewBox="0 0 12 11"><text x="1.92" y="8.33" font-size="8.064" fill="#434343">20</text></svg></span>
<span class="t" style="left:1010px;top:371px;width:12px;height:11px"><svg width="12" height="11" viewBox="0 0 12 11"><text x="1.52" y="8.33" font-size="8.064" fill="#434343">20</text></svg></span>
<span class="t" style="left:1076px;top:371px;width:21px;height:11px"><svg width="21" height="11" viewBox="0 0 21 11"><text x="1.92" y="8.33" font-size="8.064" fill="#434343">4000</text></svg></span>
</div>
<div role="row">
<span class="t" style="left:146px;top:403px;width:52px;height:11px"><svg width="52" height="11" viewBox="0 0 52 11"><text x="1.67" y="8.58" font-size="8.064" fill="#434343">安徽医科大学</text></svg></span>
<span class="t" style="left:213px;top:403px;width:27px;height:11px"><svg width="27" height="11" viewBox="0 0 27 11"><text x="1.32" y="8.58" font-size="8.064" fill="#434343">杨明明</text></svg></span>
<span class="t" style="left:269px;top:403px;width:84px;height:11px"><svg width="84" height="11" viewBox="0 0 84 11"><text x="1.92" y="8.58" font-size="8.064" fill="#434343">365489541258954896</text></svg></span>
<span class="t" style="left:369px;top:403px;width:5px;height:11px"><svg width="5" height="11" viewBox="0 0 5 11"><text x="1.17" y="8.58" font-size="8.064" fill="#434343">-</text></svg></span>
<span class="t" style="left:425px;top:403px;width:12px;height:11px"><svg width="12" height="11" viewBox="0 0 12 11"><text x="1.92" y="8.58" font-size="8.064" fill="#434343">31</text></svg></span>
<span class="t" style="left:482px;top:403px;width:12px;height:11px"><svg width="12" height="11" viewBox="0 0 12 11"><text x="1.92" y="8.58" font-size="8.064" fill="#434343">26</text></svg></span>
<span class="t" style="left:546px;top:403px;width:31px;height:11px"><svg width="31" height="11" viewBox="0 0 31 11"><text x="1.17" y="8.58" font-size="8.064" fill="#434343">执勤岗4</text></svg></span>
<span class="t" style="left:597px;top:403px;width:19px;height:11px"><svg width="19" height="11" viewBox="0 0 19 11"><text x="1.12" y="8.58" font-size="8.064" fill="#434343">白班</text></svg></span>
<span class="t" style="left:647px;top:403px;width:19px;height:11px"><svg width="19" height="11" viewBox="0 0 19 11"><text x="1.72" y="8.58" font-size="8.064" fill="#434343">主职</text></svg></span>
<span class="t" style="left:698px;top:403px;width:16px;height:11px"><svg width="16" height="11" viewBox="0 0 16 11"><text x="1.17" y="8.58" font-size="8.064" fill="#434343">100</text></svg></span>
<span class="t" style="left:749px;top:403px;width:21px;height:11px"><svg width="21" height="11" viewBox="0 0 21 11"><text x="1.17" y="8.58" font-size="8.064" fill="#434343">2000</text></svg></span>
<span class="t" style="left:799px;top:403px;width:17px;height:11px"><svg width="17" height="11" viewBox="0 0 17 11"><text x="1.92" y="8.58" font-size="8.064" fill="#434343">200</text></svg></span>
<span class="t" style="left:850px;top:403px;width:16px;height:11px"><svg width="16" height="11" viewBox="0 0 16 11"><text x="1.42" y="8.58" font-size="8.064" fill="#434343">400</text></svg></span>
<span class="t" style="left:900px;top:403px;width:17px;height:11px"><svg width="17" height="11" viewBox="0 0 17 11"><text x="1.92" y="8.58" font-size="8.064" fill="#434343">300</text></svg></span>
<span class="t" style="left:951px;top:403px;width:12px;height:11px"><svg width="12" height="11" viewBox="0 0 12 11"><text x="1.92" y="8.58" font-size="8.064" fill="#434343">20</text></svg></span>
<span class="t" style="left:1010px;top:403px;width:12px;height:11px"><svg width="12" height="11" viewBox="0 0 12 11"><text x="1.52" y="8.58" font-size="8.064" fill="#434343">20</text></svg></span>
<span class="t" style="left:1076px;top:403px;width:21px;height:11px"><svg width="21" height="11" viewBox="0 0 21 11"><text x="1.92" y="8.58" font-size="8.064" fill="#434343">4000</text></svg></span>
</div>
<div role="row">
<span class="t" style="left:146px;top:435px;width:52px;height:11px"><svg width="52" height="11" viewBox="0 0 52 11"><text x="1.67" y="8.84" font-size="8.064" fill="#434343">安徽医科大学</text></svg></span>
<span class="t" style="left:213px;top:435px;width:27px;height:11px"><svg width="27" height="11" viewBox="0 0 27 11"><text x="1.32" y="8.84" font-size="8.064" fill="#434343">杨明明</text></svg></span>
<span class="t" style="left:269px;top:435px;width:84px;height:11px"><svg width="84" height="11" viewBox="0 0 84 11"><text x="1.92" y="8.84" font-size="8.064" fill="#434343">365489541258954896</text></svg></span>
<span class="t" style="left:369px;top:435px;width:5px;height:11px"><svg width="5" height="11" viewBox="0 0 5 11"><text x="1.17" y="8.84" font-size="8.064" fill="#434343">-</text></svg></span>
<span class="t" style="left:425px;top:435px;width:12px;height:11px"><svg width="12" height="11" viewBox="0 0 12 11"><text x="1.92" y="8.84" font-size="8.064" fill="#434343">31</text></svg></span>
<span class="t" style="left:482px;top:435px;width:12px;height:11px"><svg width="12" height="11" viewBox="0 0 12 11"><text x="1.92" y="8.84" font-size="8.064" fill="#434343">26</text></svg></span>
<span class="t" style="left:546px;top:435px;width:31px;height:11px"><svg width="31" height="11" viewBox="0 0 31 11"><text x="1.17" y="8.84" font-size="8.064" fill="#434343">执勤岗4</text></svg></span>
<span class="t" style="left:597px;top:435px;width:19px;height:11px"><svg width="19" height="11" viewBox="0 0 19 11"><text x="1.12" y="8.84" font-size="8.064" fill="#434343">白班</text></svg></span>
<span class="t" style="left:647px;top:435px;width:19px;height:11px"><svg width="19" height="11" viewBox="0 0 19 11"><text x="1.72" y="8.84" font-size="8.064" fill="#434343">主职</text></svg></span>
<span class="t" style="left:698px;top:435px;width:16px;height:11px"><svg width="16" height="11" viewBox="0 0 16 11"><text x="1.17" y="8.84" font-size="8.064" fill="#434343">100</text></svg></span>
<span class="t" style="left:749px;top:435px;width:21px;height:11px"><svg width="21" height="11" viewBox="0 0 21 11"><text x="1.17" y="8.84" font-size="8.064" fill="#434343">2000</text></svg></span>
<span class="t" style="left:799px;top:435px;width:17px;height:11px"><svg width="17" height="11" viewBox="0 0 17 11"><text x="1.92" y="8.84" font-size="8.064" fill="#434343">200</text></svg></span>
<span class="t" style="left:850px;top:435px;width:16px;height:11px"><svg width="16" height="11" viewBox="0 0 16 11"><text x="1.42" y="8.84" font-size="8.064" fill="#434343">400</text></svg></span>
<span class="t" style="left:900px;top:435px;width:17px;height:11px"><svg width="17" height="11" viewBox="0 0 17 11"><text x="1.92" y="8.84" font-size="8.064" fill="#434343">300</text></svg></span>
<span class="t" style="left:951px;top:435px;width:12px;height:11px"><svg width="12" height="11" viewBox="0 0 12 11"><text x="1.92" y="8.84" font-size="8.064" fill="#434343">20</text></svg></span>
<span class="t" style="left:1010px;top:435px;width:12px;height:11px"><svg width="12" height="11" viewBox="0 0 12 11"><text x="1.52" y="8.84" font-size="8.064" fill="#434343">20</text></svg></span>
<span class="t" style="left:1076px;top:435px;width:21px;height:11px"><svg width="21" height="11" viewBox="0 0 21 11"><text x="1.92" y="8.84" font-size="8.064" fill="#434343">4000</text></svg></span>
</div>
<div role="row" class="total">
<span class="t" style="left:425px;top:467px;width:17px;height:12px"><svg width="17" height="12" viewBox="0 0 17 12"><text x="1.92" y="9.09" font-size="8.064" fill="#434343">248</text></svg></span>
<span class="t" style="left:482px;top:467px;width:17px;height:12px"><svg width="17" height="12" viewBox="0 0 17 12"><text x="1.92" y="9.09" font-size="8.064" fill="#434343">208</text></svg></span>
<span class="t" style="left:698px;top:467px;width:16px;height:12px"><svg width="16" height="12" viewBox="0 0 16 12"><text x="1.17" y="9.09" font-size="8.064" fill="#434343">800</text></svg></span>
<span class="t" style="left:749px;top:467px;width:25px;height:12px"><svg width="25" height="12" viewBox="0 0 25 12"><text x="1.17" y="9.09" font-size="8.064" fill="#434343">16000</text></svg></span>
<span class="t" style="left:799px;top:467px;width:21px;height:12px"><svg width="21" height="12" viewBox="0 0 21 12"><text x="1.92" y="9.09" font-size="8.064" fill="#434343">1600</text></svg></span>
<span class="t" style="left:850px;top:467px;width:21px;height:12px"><svg width="21" height="12" viewBox="0 0 21 12"><text x="1.42" y="9.09" font-size="8.064" fill="#434343">3200</text></svg></span>
<span class="t" style="left:900px;top:467px;width:21px;height:12px"><svg width="21" height="12" viewBox="0 0 21 12"><text x="1.92" y="9.09" font-size="8.064" fill="#434343">2400</text></svg></span>
<span class="t" style="left:951px;top:467px;width:17px;height:12px"><svg width="17" height="12" viewBox="0 0 17 12"><text x="1.92" y="9.09" font-size="8.064" fill="#434343">160</text></svg></span>
<span class="t" style="left:1010px;top:467px;width:16px;height:12px"><svg width="16" height="12" viewBox="0 0 16 12"><text x="1.52" y="9.09" font-size="8.064" fill="#434343">160</text></svg></span>
<span class="t" style="left:1076px;top:467px;width:26px;height:12px"><svg width="26" height="12" viewBox="0 0 26 12"><text x="1.92" y="9.09" font-size="8.064" fill="#434343">32000</text></svg></span>
</div>
</div>
</section>
</main>
<svg id="corners" class="abs" style="left:0;top:0" width="1106" height="618" viewBox="0 0 1106 618" fill="#000" shape-rendering="crispEdges"><path d="M0 0H10.9A19.5 19.5 0 0 0 0 10.9Z"/><path d="M1106 0V10.9A19.5 19.5 0 0 0 1095.1 0Z"/><path d="M0 618V607.1A19.5 19.5 0 0 0 10.9 618Z"/><path d="M1106 618H1095.1A19.5 19.5 0 0 0 1106 607.1Z"/></svg>
</div>
</body></html>
